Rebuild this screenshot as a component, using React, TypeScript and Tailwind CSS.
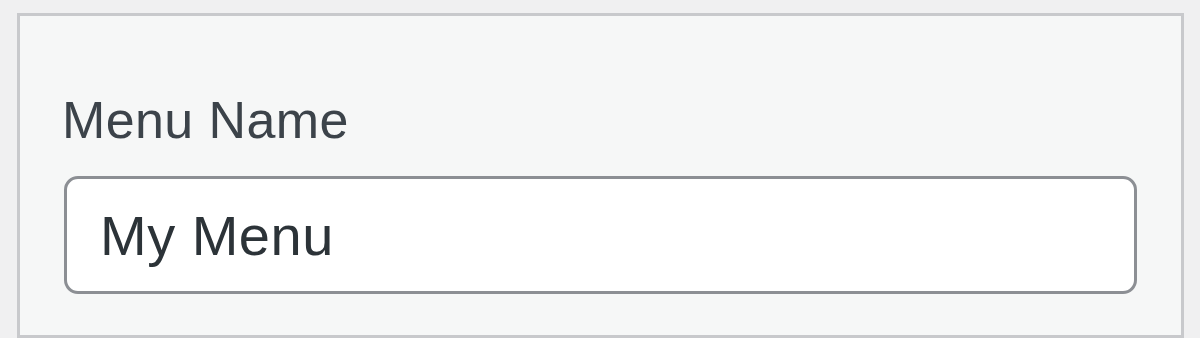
export default function App() {
  return (
    <div className="w-[1200px] h-[351px] bg-white" style={{ fontFamily: '"Liberation Sans", Arial, sans-serif' }}>
      <div className="bg-[#f0f0f1] pt-[13px] pl-[17px] pr-[16px] h-[338px]">
        <div className="h-[325px] border-[3px] border-[#c8c9cc] bg-[#f6f7f7] pt-[73px] pl-[42px] pr-[44px] flex flex-col">
          <label className="text-[52px] leading-[62px] tracking-[0.4px] text-[#3c434a]">Menu Name</label>
          <div className="mt-[25px] ml-[2px] h-[118px] border-[3px] border-[#8c8f94] rounded-[14px] bg-white flex items-center pl-[33px]">
            <span className="text-[56px] leading-none tracking-[0.5px] text-[#2c3338] mt-[1px]">My Menu</span>
          </div>
        </div>
      </div>
    </div>
  );
}
